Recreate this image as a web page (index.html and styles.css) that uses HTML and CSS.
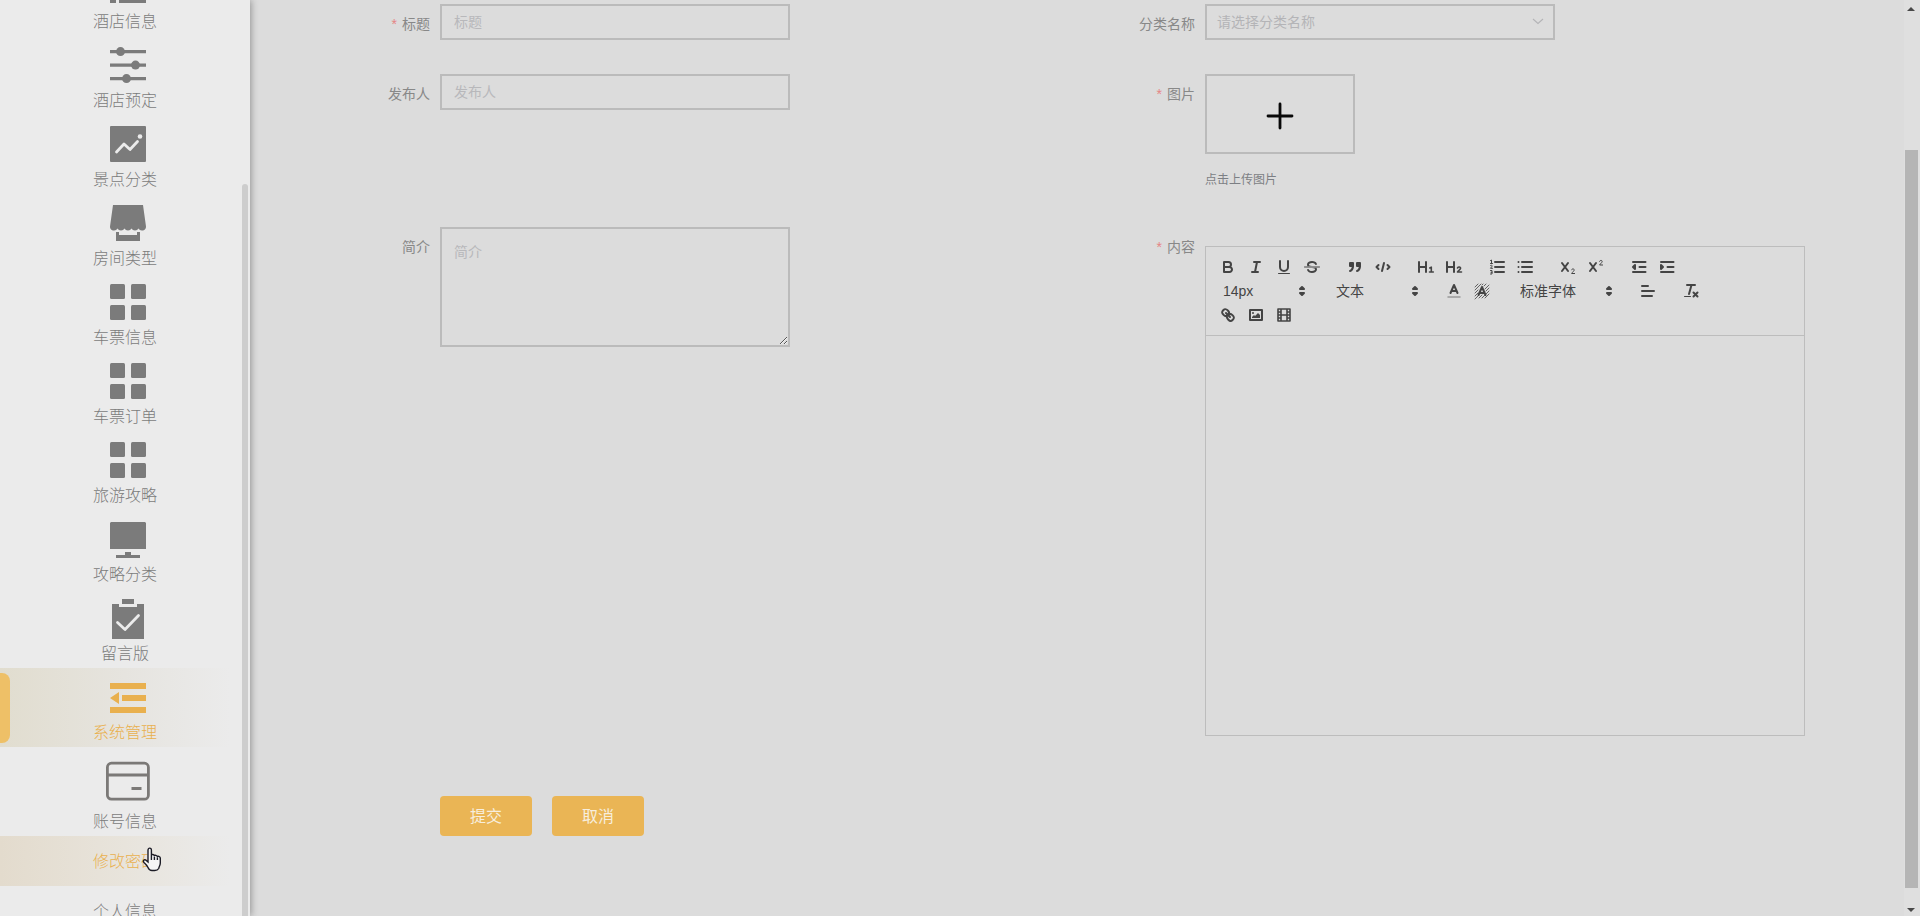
FILE: index.html
```html
<!DOCTYPE html>
<html lang="zh-CN">
<head>
<meta charset="utf-8">
<title>旅游攻略</title>
<link rel="stylesheet" href="styles.css">
</head>
<body>
<svg class="defs" width="0" height="0">
  <symbol id="grid" viewBox="0 0 48 48"><rect x="6" y="6" width="15" height="15" rx="1.5"/><rect x="27" y="6" width="15" height="15" rx="1.5"/><rect x="6" y="27" width="15" height="15" rx="1.5"/><rect x="27" y="27" width="15" height="15" rx="1.5"/></symbol>
  <symbol id="updown" viewBox="0 0 18 18"><polygon class="both" points="7 11 9 13 11 11 7 11"/><polygon class="both" points="7 7 9 5 11 7 7 7"/></symbol>
</svg>
<div class="app">
  <nav class="sidebar">
    <ul class="menu">
      <li class="item"><svg class="icon" viewBox="0 0 48 48"><path d="M6 6h6v8H6zM15 6h27v8H15zM6 20h6v8H6zM15 20h27v8H15zM6 34h6v6H6zM15 34h27v6H15z"/></svg><span>酒店信息</span></li>
      <li class="item"><svg class="icon" viewBox="0 0 48 48"><path d="M6 8h36v3.200H6zM6 21.500h36v3.200H6zM6 35h36v3.200H6z"/><circle cx="16.500" cy="9.600" r="4.500"/><circle cx="31.500" cy="23.100" r="4.500"/><circle cx="22.500" cy="36.600" r="4.500"/></svg><span>酒店预定</span></li>
      <li class="item"><svg class="icon" viewBox="0 0 48 48"><rect x="6" y="5" width="36" height="36" rx="1"/><path class="cut" d="M12.500 31l7.500-8 6 5.500 7.500-8"/><circle class="dot" cx="36" cy="15.500" r="2.300"/></svg><span>景点分类</span></li>
      <li class="item"><svg class="icon" viewBox="0 0 48 48"><path d="M9 5h30l3 21.500a4 4 0 0 1-7.500 2 4 4 0 0 1-7 0 4 4 0 0 1-7 0 4 4 0 0 1-7 0A4 4 0 0 1 6 26.500zM12 32h3v3h18v-3h3v9H12z"/></svg><span>房间类型</span></li>
      <li class="item"><svg class="icon"><use href="#grid" y="-1"/></svg><span>车票信息</span></li>
      <li class="item"><svg class="icon"><use href="#grid" y="-1"/></svg><span>车票订单</span></li>
      <li class="item"><svg class="icon"><use href="#grid" y="-1"/></svg><span>旅游攻略</span></li>
      <li class="item"><svg class="icon" viewBox="0 0 48 48"><path d="M7 6h34l1 1v26H6V7zM21 36h6v3h9v3H12v-3h9z"/></svg><span>攻略分类</span></li>
      <li class="item"><svg class="icon" viewBox="0 0 48 48"><path d="M18 4h12v5H18zM8 9h7v3h18V9h7v35H8z"/><path class="cut" d="M13.500 27.500l7.500 7 13.500-14"/></svg><span>留言版</span></li>
      <li class="item active"><svg class="icon" viewBox="0 0 48 48"><path d="M6 9h36v6H6zM18 21h24v6H18zM6 33h36v6H6zM6 24l9-6v12z"/></svg><span>系统管理</span></li>
      <li class="item account"><svg class="icon" viewBox="0 0 48 48"><g fill="none" stroke="#7b7977" stroke-width="2.800"><rect x="3.400" y="6.200" width="41" height="36" rx="4"/><path d="M3.400 18h41M27.500 31.500h10"/></g></svg><span>账号信息</span></li>
      <li class="sub current">修改密码</li>
      <li class="sub">个人信息</li>
    </ul>
    <i class="side-thumb"></i>
    <svg class="cursor" width="20" height="26" viewBox="0 0 20 26"><path d="M6 15V3.200C6 .4 9.400.4 9.400 3.200V8.500c0-1.500 3-1.200 3 .6 0-1.300 3-1 3 .8 0-1.200 2.900-.8 2.900 1.200V16c0 2-1.300 4-1.600 5.500-.8 1.400-2 2-4 2H10c-2 0-3.300-1.200-4-3-.8-1.700-2-3.200-4-5-1.800-2 .5-3.500 2-2.300zM9.400 8.500V13M12.400 9.500V13M15.400 10.300V13"/></svg>
  </nav>
  <main class="main">
    <form class="form">
      <div class="field"><label class="req">标题</label><input class="box" placeholder="标题"></div>
      <div class="field"><label>分类名称</label><div class="box select"><span>请选择分类名称</span><svg width="12" height="12" viewBox="0 0 12 12"><path d="M1 4l5 4.500L11 4"/></svg></div></div>
      <div class="field tall"><label>发布人</label><input class="box" placeholder="发布人"></div>
      <div class="field tall"><label class="req">图片</label><div><div class="upload"><svg width="28" height="28" viewBox="0 0 28 28"><path d="M14 2v24M2 14h24"/></svg></div><p class="tip">点击上传图片</p></div></div>
      <div class="field"><label>简介</label><textarea class="box area" placeholder="简介"></textarea></div>
      <div class="field"><label class="req">内容</label>
        <div class="editor">
          <div class="toolbar">
            <span class="formats">
              <b class="tool"><svg viewBox="0 0 18 18"><path class="s" d="M5 4H9.500A2.500 2.500 0 0 1 12 6.500 2.500 2.500 0 0 1 9.500 9H5ZM5 9h5.500A2.500 2.500 0 0 1 13 11.500 2.500 2.500 0 0 1 10.500 14H5Z"/></svg></b>
              <b class="tool"><svg viewBox="0 0 18 18"><path class="s" d="M7 4h6M5 14h6M8 14L10 4"/></svg></b>
              <b class="tool"><svg viewBox="0 0 18 18"><path class="s" d="M5 3V9a4.012 4.012 0 0 0 4 4H9a4.012 4.012 0 0 0 4-4V3"/><rect class="f" x="3" y="15" width="12" height="1" rx=".5"/></svg></b>
              <b class="tool"><svg viewBox="0 0 18 18"><path class="s thin" d="M1.500 9h15"/><path class="f" d="M9.007 8C6.542 7.791 6 7.519 6 6.500 6 5.792 7.283 5 9 5c1.571 0 2.765.679 2.969 1.309a1 1 0 0 0 1.900-.617C13.356 4.106 11.354 3 9 3 6.200 3 4 4.538 4 6.500a3.200 3.200 0 0 0 .5 1.843ZM8.984 10C11.457 10.208 12 10.479 12 11.500c0 .708-1.283 1.500-3 1.500-1.571 0-2.765-.679-2.969-1.309a1 1 0 1 0-1.900.617C4.644 13.894 6.646 15 9 15c2.800 0 5-1.538 5-3.500a3.200 3.200 0 0 0-.5-1.843Z"/></svg></b>
            </span>
            <span class="formats">
              <b class="tool"><svg viewBox="0 0 18 18"><rect class="both" x="4" y="5" width="3" height="3"/><rect class="both" x="11" y="5" width="3" height="3"/><path class="both" d="M7 8c0 4.031-3 5-3 5M14 8c0 4.031-3 5-3 5"/></svg></b>
              <b class="tool"><svg viewBox="0 0 18 18"><path class="s" d="M4.500 7l-2 2 2 2M13.500 7l2 2-2 2M10 5L8 13"/></svg></b>
            </span>
            <span class="formats">
              <b class="tool"><svg viewBox="0 0 18 18"><path class="s" d="M2 4v10M9 4v10M2 9h7"/><path class="s mid" d="M12.800 10l1.500-.8v4.800M12.500 14h3.800"/></svg></b>
              <b class="tool"><svg viewBox="0 0 18 18"><path class="s" d="M2 4v10M9 4v10M2 9h7"/><path class="s mid" d="M12.500 10c.3-1.600 3.500-1.300 3 .5-.3 1-1.500 1.500-3 3.500h4"/></svg></b>
            </span>
            <span class="formats">
              <b class="tool"><svg viewBox="0 0 18 18"><path class="s" d="M7 4h9M7 9h9M7 14h9"/><path class="s thin" d="M2.500 2.500l1-.5v3.500M2.500 5.500h2M2.500 7.500c1-.8 2 0 1.500.8l-1.500 2h2M2.500 12.500h1.500v3.500H2.500M3 14.300h1"/></svg></b>
              <b class="tool"><svg viewBox="0 0 18 18"><path class="s" d="M6 4h10M6 9h10M6 14h10M2.500 4h0M2.500 9h0M2.500 14h0"/></svg></b>
            </span>
            <span class="formats">
              <b class="tool"><svg viewBox="0 0 18 18"><path class="s" d="M3 5l6 8M9 5l-6 8"/><path class="s thin" d="M12.600 11.800c.3-1.500 3-1.200 2.500.5-.3 1-1.400 1.500-2.500 3.200h3"/></svg></b>
              <b class="tool"><svg viewBox="0 0 18 18"><path class="s" d="M3 5l6 8M9 5l-6 8"/><path class="s thin" d="M12.600 3.300c.3-1.500 3-1.200 2.500.5-.3 1-1.400 1.500-2.500 3.200h3"/></svg></b>
            </span>
            <span class="formats">
              <b class="tool"><svg viewBox="0 0 18 18"><path class="s" d="M3 14h12.500M3 4h12.500M9.500 9h6"/><path class="both" d="M5 7v4L3 9z"/></svg></b>
              <b class="tool"><svg viewBox="0 0 18 18"><path class="s" d="M3 14h12.500M3 4h12.500M9.500 9h6"/><path class="both" d="M3 7v4l2-2z"/></svg></b>
            </span>
            <i class="wrap"></i>
            <span class="formats picker">14px<svg viewBox="0 0 18 18"><use href="#updown"/></svg></span>
            <span class="formats picker">文本<svg viewBox="0 0 18 18"><use href="#updown"/></svg></span>
            <span class="formats">
              <b class="tool"><svg viewBox="0 0 18 18"><path class="s faint" d="M3 15h12"/><path class="s" d="M5.500 11L9 3l3.500 8M6.500 9h5"/></svg></b>
              <b class="tool"><svg viewBox="0 0 18 18"><path class="s hatch" d="M2 5l3-3M2 8l6-6M2 11L5 8M2 14l3-3M2 17l4-4M6 16l3-3M9 16l3-3M12 16l4-4M13 12l3-3M13 9l3-3M12 7l4-4M9 3l1-1M11 4l2-2"/><path class="s" d="M5.500 13L9 5l3.500 8M6.500 11h5"/></svg></b>
            </span>
            <span class="formats picker wide">标准字体<svg viewBox="0 0 18 18"><use href="#updown"/></svg></span>
            <span class="formats"><b class="tool"><svg viewBox="0 0 18 18"><path class="s" d="M3 9h12M3 14h10M3 4h6"/></svg></b></span>
            <span class="formats"><b class="tool"><svg viewBox="0 0 18 18"><path class="s" d="M5 3h8M7 12L9.500 3M11.500 10.500l4 4M15.500 10.500l-4 4"/><rect class="f" x="2" y="14" width="7" height="1" rx=".5"/></svg></b></span>
            <i class="wrap"></i>
            <span class="formats">
              <b class="tool"><svg viewBox="0 0 18 18"><path class="s" d="M7 7l4 4"/><path class="s" d="M8.900 4.577a3.476 3.476 0 0 1 .36 4.679A3.476 3.476 0 0 1 4.577 8.900C3.185 7.500 2.035 6.400 4.217 4.217S7.500 3.185 8.900 4.577ZM13.423 9.100a3.476 3.476 0 0 0-4.679-.36 3.476 3.476 0 0 0 .36 4.679c1.392 1.392 2.500 2.542 4.679.36S14.815 10.500 13.423 9.100Z"/></svg></b>
              <b class="tool"><svg viewBox="0 0 18 18"><path class="s" d="M3 4h12v10H3z"/><circle class="f" cx="6" cy="7" r="1"/><path class="f" d="M5 12v-1l2-2 1 1 3-3 2 2v3z"/></svg></b>
              <b class="tool"><svg viewBox="0 0 18 18"><path class="s mid" d="M3 3h12v12H3zM6 3v12M12 3v12M6 9h6M3 6h3M3 9h3M3 12h3M12 6h3M12 9h3M12 12h3"/></svg></b>
            </span>
          </div>
          <div class="content"></div>
        </div>
      </div>
      <div class="actions"><button type="button">提交</button><button type="button">取消</button></div>
    </form>
  </main>
  <div class="scroll"><i class="up"></i><i class="thumb"></i><i class="down"></i></div>
</div>
</body>
</html>
```
FILE: styles.css
```css
* { box-sizing: border-box; }
body { margin: 0; font-family: "Liberation Sans", "Noto Sans CJK SC", sans-serif; background: #dcdcdc; }
.defs { position: absolute; }
.app { display: flex; height: 916px; overflow: hidden; }

.sidebar { position: relative; z-index: 1; width: 250px; flex: none; height: 916px; background: #ebebeb; box-shadow: 1px 0 7px rgba(0, 0, 0, .34); clip-path: inset(0 -14px 0 0); font-family: "Noto Sans CJK SC", sans-serif; font-weight: 300; }
.menu { list-style: none; margin: -43px 0 0; padding: 0; font-size: 16px; color: #7b7b7b; }
.item { position: relative; height: 79px; padding-top: 6px; display: flex; flex-direction: column; align-items: center; line-height: 20px; }
.item span { margin-top: -1.5px; }
.icon { width: 48px; height: 48px; margin-left: 6px; fill: #7b7b7b; flex: none; }
.cut { fill: none; stroke: #ebebeb; stroke-width: 2.8; stroke-linecap: round; stroke-linejoin: round; }
.dot { fill: #ebebeb; }
.active { color: #e9b04e; background: linear-gradient(90deg, #e1ddcf, #e6e4df 50%, #ebebeb 92%); }
.active .icon { fill: #e9b04e; }
.active::before { content: ""; position: absolute; left: 0; top: 5px; width: 10px; height: 70px; border-radius: 0 8px 8px 0; background: #eec067; }
.account { height: 89px; padding-top: 10px; }
.account span { margin-top: 5px; }
.sub { height: 50px; line-height: 48px; text-align: center; }
.current { color: #e9b04e; background: linear-gradient(90deg, #e3dbcd, #e8e4dc 50%, #ebebeb 92%); }
.side-thumb { position: absolute; left: 242px; top: 184px; width: 6px; height: 732px; background: #cdcdcd; border-radius: 3px 3px 0 0; }
.cursor { position: absolute; left: 142px; top: 847px; fill: #f5f5f5; stroke: #1b1b25; stroke-width: 1.4; }

.main { flex: 1; padding: 4px 0 0 40px; }
.form { display: grid; grid-template-columns: 765px 765px; align-items: start; }
.field { display: flex; align-items: flex-start; height: 70px; }
.tall { height: 153px; }
.field label { width: 150px; padding-right: 10px; text-align: right; font-size: 14px; line-height: 40px; color: #888; flex: none; }
.req::before { content: "*"; color: #e58585; margin-right: 5px; }
.box { width: 350px; height: 36px; border: 2px solid #bbb; background: transparent; padding: 0 12px 2px; font: 14px "Noto Sans CJK SC", sans-serif; color: #888; outline: none; }
.box::placeholder { color: #b8b8bb; opacity: 1; }
.select { display: flex; align-items: center; justify-content: space-between; padding: 0 9px 2px 10px; color: #b4b4b7; }
.select svg { fill: none; stroke: #b4b4b7; stroke-width: 1.1; }
.area { height: 120px; padding: 12px; line-height: 21px; resize: both; }
.upload { width: 150px; height: 80px; border: 2px solid #bbb; display: flex; align-items: center; justify-content: center; }
.upload svg { fill: none; stroke: #080808; stroke-width: 2.8; stroke-linecap: round; margin-top: 3px; }
.tip { margin: 16px 0 0; font-size: 12px; line-height: 20px; color: #7c7f84; }

.editor { width: 600px; height: 490px; margin-top: 19px; border: 1px solid #bdbdbd; flex: none; }
.toolbar { height: 89px; padding: 8px; border-bottom: 1px solid #bdbdbd; display: flex; flex-wrap: wrap; align-content: flex-start; color: #444; }
.formats { display: flex; margin-right: 15px; height: 24px; }
.wrap { width: 100%; height: 0; }
.tool { width: 28px; height: 24px; padding: 3px 5px; }
.tool svg { display: block; width: 18px; height: 18px; }
.s { fill: none; stroke: #444; stroke-width: 2; stroke-linecap: round; stroke-linejoin: round; }
.f { fill: #444; }
.both { fill: #444; stroke: #444; stroke-width: 2; stroke-linejoin: round; stroke-linecap: round; }
.thin { stroke-width: 1; }
.mid { stroke-width: 1.6; }
.faint { stroke: #999; stroke-width: 1.5; }
.hatch { stroke-width: .8; }
.picker { width: 98px; padding: 0 1px 0 9px; font-size: 14px; line-height: 24px; align-items: center; justify-content: space-between; }
.picker svg { width: 18px; height: 18px; }
.wide { width: 108px; }
.actions { grid-column: 1 / -1; display: flex; gap: 20px; padding-left: 150px; margin-top: 499px; }
.actions button { width: 92px; height: 40px; border: 0; border-radius: 4px; background: #eab555; color: #f7eedd; font: 16px "Noto Sans CJK SC", sans-serif; padding: 0 0 3px; }

.scroll { width: 16px; flex: none; background: #dfdfdf; display: flex; flex-direction: column; align-items: center; padding: 7px 2px 4px 0; }
.thumb { width: 13px; height: 738px; margin-top: 139px; background: #b5b5b5; }
.up, .down { height: 4px; border: 4px solid transparent; border-top: 0; border-bottom-color: #484848; }
.down { margin-top: auto; border-bottom: 0; border-top: 4px solid #484848; }
```
